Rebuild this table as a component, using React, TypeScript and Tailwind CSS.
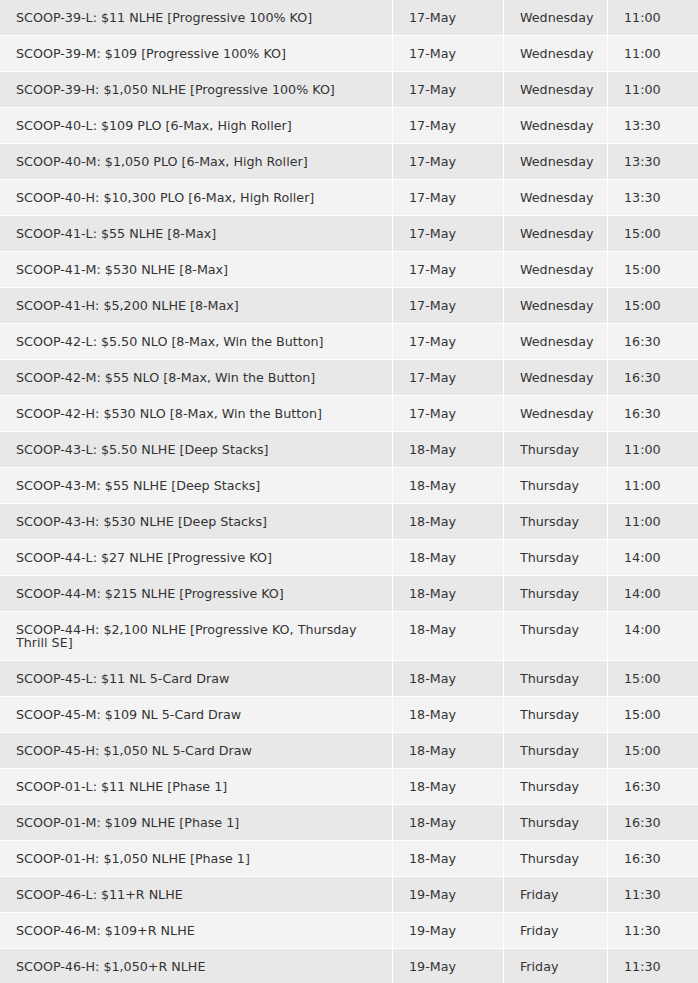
const rows: [string, string, string, string][] = [
  ["SCOOP-39-L: $11 NLHE [Progressive 100% KO]", "17-May", "Wednesday", "11:00"],
  ["SCOOP-39-M: $109 [Progressive 100% KO]", "17-May", "Wednesday", "11:00"],
  ["SCOOP-39-H: $1,050 NLHE [Progressive 100% KO]", "17-May", "Wednesday", "11:00"],
  ["SCOOP-40-L: $109 PLO [6-Max, High Roller]", "17-May", "Wednesday", "13:30"],
  ["SCOOP-40-M: $1,050 PLO [6-Max, High Roller]", "17-May", "Wednesday", "13:30"],
  ["SCOOP-40-H: $10,300 PLO [6-Max, High Roller]", "17-May", "Wednesday", "13:30"],
  ["SCOOP-41-L: $55 NLHE [8-Max]", "17-May", "Wednesday", "15:00"],
  ["SCOOP-41-M: $530 NLHE [8-Max]", "17-May", "Wednesday", "15:00"],
  ["SCOOP-41-H: $5,200 NLHE [8-Max]", "17-May", "Wednesday", "15:00"],
  ["SCOOP-42-L: $5.50 NLO [8-Max, Win the Button]", "17-May", "Wednesday", "16:30"],
  ["SCOOP-42-M: $55 NLO [8-Max, Win the Button]", "17-May", "Wednesday", "16:30"],
  ["SCOOP-42-H: $530 NLO [8-Max, Win the Button]", "17-May", "Wednesday", "16:30"],
  ["SCOOP-43-L: $5.50 NLHE [Deep Stacks]", "18-May", "Thursday", "11:00"],
  ["SCOOP-43-M: $55 NLHE [Deep Stacks]", "18-May", "Thursday", "11:00"],
  ["SCOOP-43-H: $530 NLHE [Deep Stacks]", "18-May", "Thursday", "11:00"],
  ["SCOOP-44-L: $27 NLHE [Progressive KO]", "18-May", "Thursday", "14:00"],
  ["SCOOP-44-M: $215 NLHE [Progressive KO]", "18-May", "Thursday", "14:00"],
  ["SCOOP-44-H: $2,100 NLHE [Progressive KO, Thursday Thrill SE]", "18-May", "Thursday", "14:00"],
  ["SCOOP-45-L: $11 NL 5-Card Draw", "18-May", "Thursday", "15:00"],
  ["SCOOP-45-M: $109 NL 5-Card Draw", "18-May", "Thursday", "15:00"],
  ["SCOOP-45-H: $1,050 NL 5-Card Draw", "18-May", "Thursday", "15:00"],
  ["SCOOP-01-L: $11 NLHE [Phase 1]", "18-May", "Thursday", "16:30"],
  ["SCOOP-01-M: $109 NLHE [Phase 1]", "18-May", "Thursday", "16:30"],
  ["SCOOP-01-H: $1,050 NLHE [Phase 1]", "18-May", "Thursday", "16:30"],
  ["SCOOP-46-L: $11+R NLHE", "19-May", "Friday", "11:30"],
  ["SCOOP-46-M: $109+R NLHE", "19-May", "Friday", "11:30"],
  ["SCOOP-46-H: $1,050+R NLHE", "19-May", "Friday", "11:30"],
];

export default function App() {
  return (
    <div className="w-[698px] bg-white text-[12.7px] leading-[13px] text-[#333] font-['DejaVu_Sans',Verdana,sans-serif]">
      {rows.map((r, i) => {
        const bg = i % 2 === 0 ? "bg-[#e9e8e8]" : "bg-[#f4f3f3]";
        return (
          <div
            key={i}
            className="grid grid-cols-[392px_110px_103px_90px] gap-x-px border-b border-white"
          >
            <div className={`${bg} pl-4 pr-4 py-[11px]`}>{r[0]}</div>
            <div className={`${bg} pl-4 py-[11px]`}>{r[1]}</div>
            <div className={`${bg} pl-4 py-[11px]`}>{r[2]}</div>
            <div className={`${bg} pl-4 py-[11px]`}>{r[3]}</div>
          </div>
        );
      })}
    </div>
  );
}
